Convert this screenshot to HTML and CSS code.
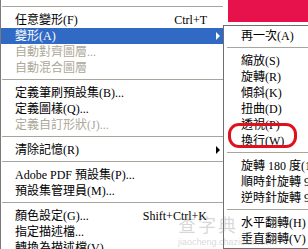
FILE: index.html
```html
<!DOCTYPE html>
<html lang="zh-Hant">
<head>
    <meta charset="UTF-8">
    <title>變形選單</title>
    <link rel="stylesheet" href="styles.css">
</head>
<body>
<div class="screen">

    <div class="menu main">
        <div class="sep"></div>
        <div class="item"><span class="label">任意變形(F)</span><span class="key">Ctrl+T</span><span class="sub"></span></div>
        <div class="item active"><span class="label">變形(A)</span><span class="key"></span><span class="sub"><i class="arrow"></i></span></div>
        <div class="item off"><span class="label">自動對齊圖層...</span><span class="key"></span><span class="sub"></span></div>
        <div class="item off"><span class="label">自動混合圖層</span><span class="key"></span><span class="sub"></span></div>
        <div class="sep"></div>
        <div class="item"><span class="label">定義筆刷預設集(B)...</span><span class="key"></span><span class="sub"></span></div>
        <div class="item"><span class="label">定義圖樣(Q)...</span><span class="key"></span><span class="sub"></span></div>
        <div class="item off"><span class="label">定義自訂形狀(J)...</span><span class="key"></span><span class="sub"></span></div>
        <div class="sep"></div>
        <div class="item"><span class="label">清除記憶(R)</span><span class="key"></span><span class="sub"><i class="arrow"></i></span></div>
        <div class="sep"></div>
        <div class="item"><span class="label">Adobe PDF 預設集(P)...</span><span class="key"></span><span class="sub"></span></div>
        <div class="item"><span class="label">預設集管理員(M)...</span><span class="key"></span><span class="sub"></span></div>
        <div class="sep"></div>
        <div class="item"><span class="label">顏色設定(G)...</span><span class="key">Shift+Ctrl+K</span><span class="sub"></span></div>
        <div class="item"><span class="label">指定描述檔...</span><span class="key"></span><span class="sub"></span></div>
        <div class="item"><span class="label">轉換為描述檔(V)...</span><span class="key"></span><span class="sub"></span></div>
    </div>

    <!-- canvas behind the menus -->
    <div class="canvas"></div>

    <div class="menu submenu">
        <div class="item"><span class="label">再一次(A)</span></div>
        <div class="sep"></div>
        <div class="item"><span class="label">縮放(S)</span></div>
        <div class="item"><span class="label">旋轉(R)</span></div>
        <div class="item"><span class="label">傾斜(K)</span></div>
        <div class="item"><span class="label">扭曲(D)</span></div>
        <div class="item"><span class="label">透視(P)</span></div>
        <div class="item"><span class="label">換行(W)</span></div>
        <div class="sep"></div>
        <div class="item"><span class="label">旋轉 180 度(1)</span></div>
        <div class="item"><span class="label">順時針旋轉 90 度(9)</span></div>
        <div class="item"><span class="label">逆時針旋轉 90 度(0)</span></div>
        <div class="sep"></div>
        <div class="item"><span class="label">水平翻轉(H)</span></div>
        <div class="item"><span class="label">垂直翻轉(V)</span></div>
    </div>

    <div class="mark"></div>

    <div class="watermark">
        <span class="wm-big">查字典</span>
        <span class="wm-url">jiaocheng.chazidian.com</span>
    </div>

</div>
</body>
</html>
```

FILE: styles.css
```css
body { margin: 0; background: #fff; }
.screen { position: relative; width: 308px; height: 249px; overflow: hidden; font: 12px/16px "Liberation Serif", "Noto Sans CJK TC", serif; color: #000; }

.menu { background: #fff; }
.main { width: 222px; border-left: 1px solid #7a7a7a; padding-top: 3px; }
.submenu { position: absolute; left: 223px; top: 25px; width: 130px; border: 1px solid #6f6f6f; padding: 2px 0 1px; }

.item { display: grid; grid-template-columns: 1fr auto 16px; height: 16px; padding-left: 14px; white-space: nowrap; }
.submenu .item { display: block; padding-left: 17px; }
.item.active { background: #316ac5; color: #fff; }
.item.off { color: #aca899; }
.key { text-align: right; }
.sub { position: relative; }
.arrow { position: absolute; left: 9px; top: 4px; width: 0; height: 0; border-left: 4px solid #000; border-top: 4px solid transparent; border-bottom: 4px solid transparent; }
.active .arrow { border-left-color: #fff; }

.sep { height: 9px; position: relative; }
.sep::before { content: ""; position: absolute; left: 1px; right: 0; top: 3px; border-top: 1px solid #a7a59c; }
.submenu .sep::before { left: 3px; }

.canvas { position: absolute; left: 228px; top: 0; width: 80px; height: 22px; background: #e7124c; }

.mark { position: absolute; left: 228px; top: 123px; width: 63px; height: 19px; border: 3px solid #e0101c; border-radius: 11px; }

.watermark { position: absolute; left: 178px; top: 214px; width: 130px; color: rgba(140, 140, 140, 0.35); pointer-events: none; }
.wm-big { display: block; font: 18px/20px "Noto Sans CJK TC", sans-serif; letter-spacing: 2px; }
.wm-url { display: block; font: 9px/12px "Liberation Sans", sans-serif; margin-top: 2px; }
```
